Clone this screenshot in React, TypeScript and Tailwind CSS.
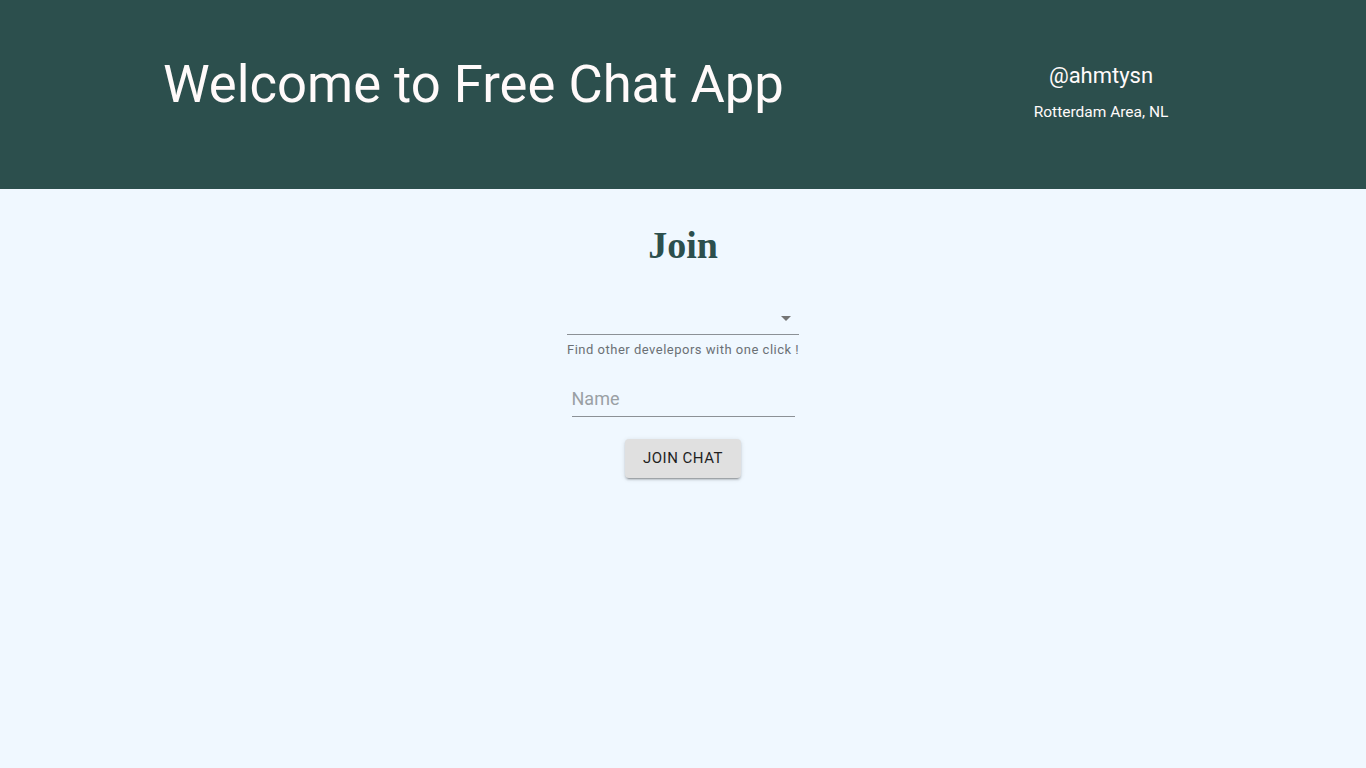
import { useState } from "react";

const App = () => {
  const [name, setName] = useState("");

  return (
    <div className="min-h-[768px] bg-[#f0f8ff] font-['Roboto',sans-serif]">
      <header className="h-[189px] bg-[#2c4f4d] flex items-start">
        <div className="pl-[163px] pt-[53px] w-[900px]">
          <h1 className="text-[52.6px] leading-[62px] font-normal text-[#fffafa]">
            Welcome to Free Chat App
          </h1>
        </div>
        <div className="ml-[101px] w-[200px] pt-[62px] flex flex-col items-center text-[#fffafa]">
          <div className="text-[22px] leading-[28px]">@ahmtysn</div>
          <div className="text-[15.5px] leading-[20px] mt-[12px]">Rotterdam Area, NL</div>
        </div>
      </header>

      <main className="flex flex-col items-center">
        <h2 className="pt-[33px] text-[38px] leading-[46px] font-bold text-[#2c4f4d] font-['Liberation_Serif',serif]">
          Join
        </h2>

        <div className="mt-[39px] w-[232px] flex flex-col">
          <div className="relative h-[28px] border-b border-[#8c9196]">
            <svg
              className="absolute right-[1px] top-[-1px]"
              width="24"
              height="24"
              viewBox="0 0 24 24"
              fill="#757575"
            >
              <path d="M7 10l5 5 5-5z" />
            </svg>
          </div>
          <p className="mt-[7px] whitespace-nowrap text-[13px] leading-[16px] tracking-[0.5px] text-[#6b7075]">
            Find other develepors with one click !
          </p>
        </div>

        <div className="mt-[30px] w-[223px] border-b border-[#8c9196]">
          <input
            value={name}
            onChange={(e) => setName(e.target.value)}
            placeholder="Name"
            className="w-full bg-transparent outline-none text-[18px] leading-[20px] pb-[7px] text-[#222] placeholder:text-[#9aa0a4]"
          />
        </div>

        <button className="mt-[22px] w-[116px] h-[39px] rounded-[4px] bg-[#e0e0e0] text-[15px] tracking-[0.5px] text-[#1f1f1f] shadow-[0_3px_1px_-2px_rgba(0,0,0,0.2),0_2px_2px_0_rgba(0,0,0,0.14),0_1px_5px_0_rgba(0,0,0,0.12)]">
          JOIN CHAT
        </button>
      </main>
    </div>
  );
};

export default App;
